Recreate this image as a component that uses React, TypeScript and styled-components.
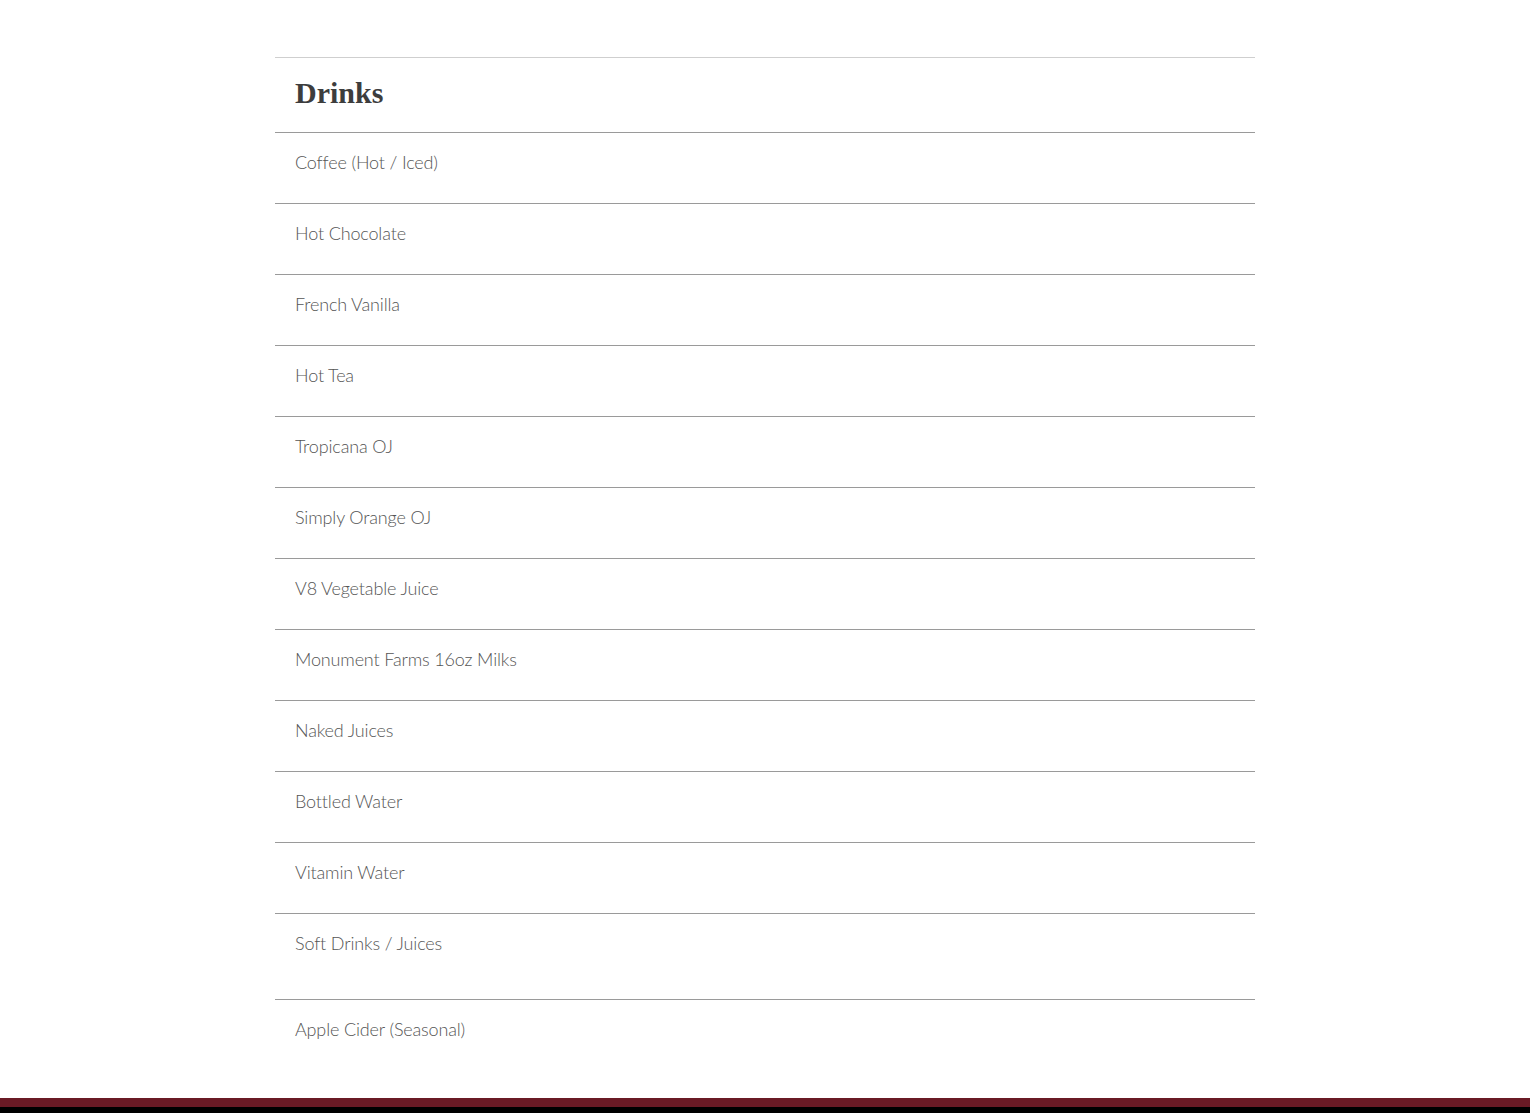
import React from "react";
import styled, { createGlobalStyle } from "styled-components";

const GlobalStyle = createGlobalStyle`
    html, body {
        margin: 0;
        padding: 0;
        background: #fff;
    }
    body {
        font-family: Lato, "Open Sans", sans-serif;
    }
`;

const Page = styled.div`
    min-height: 1113px;
    display: flex;
    flex-direction: column;
`;

const Main = styled.main`
    flex: 1;
    display: flex;
    justify-content: center;
    padding-top: 57px;
    padding-bottom: 28px;
`;

const Menu = styled.section`
    width: 980px;
    border-top: 1px solid #cfcfcf;
`;

const Heading = styled.h2`
    margin: 0;
    padding: 17px 20px 20px;
    height: 75px;
    box-sizing: border-box;
    border-bottom: 1px solid #9a9a9a;
    font-family: "Liberation Serif", "DejaVu Serif", serif;
    font-weight: 700;
    font-size: 30px;
    line-height: 36px;
    color: #3d3d3d;
`;

const List = styled.ul`
    list-style: none;
    margin: 0;
    padding: 0;
`;

const Item = styled.li<{ $tall?: boolean; $last?: boolean }>`
    padding: 15px 20px ${p => (p.$tall ? 42 : 27)}px;
    border-bottom: ${p => (p.$last ? "none" : "1px solid #9a9a9a")};
    font-family: Lato, "Open Sans", sans-serif;
    font-weight: 300;
    font-size: 18px;
    line-height: 28px;
    letter-spacing: -0.15px;
    color: #555;
`;

const Footer = styled.footer`
    height: 15px;
    border-top: 9px solid #6a1a25;
    background: #000;
    box-sizing: border-box;
`;

const drinks = [
    "Coffee (Hot / Iced)",
    "Hot Chocolate",
    "French Vanilla",
    "Hot Tea",
    "Tropicana OJ",
    "Simply Orange OJ",
    "V8 Vegetable Juice",
    "Monument Farms 16oz Milks",
    "Naked Juices",
    "Bottled Water",
    "Vitamin Water",
    "Soft Drinks / Juices",
    "Apple Cider (Seasonal)",
];

const App: React.FC = () => {
    return (
        <Page>
            <GlobalStyle />
            <Main>
                <Menu>
                    <Heading>Drinks</Heading>
                    <List>
                        {drinks.map((name, i) => (
                            <Item
                                key={name}
                                $tall={name === "Soft Drinks / Juices"}
                                $last={i === drinks.length - 1}
                            >
                                {name}
                            </Item>
                        ))}
                    </List>
                </Menu>
            </Main>
            <Footer />
        </Page>
    );
};

export default App;
